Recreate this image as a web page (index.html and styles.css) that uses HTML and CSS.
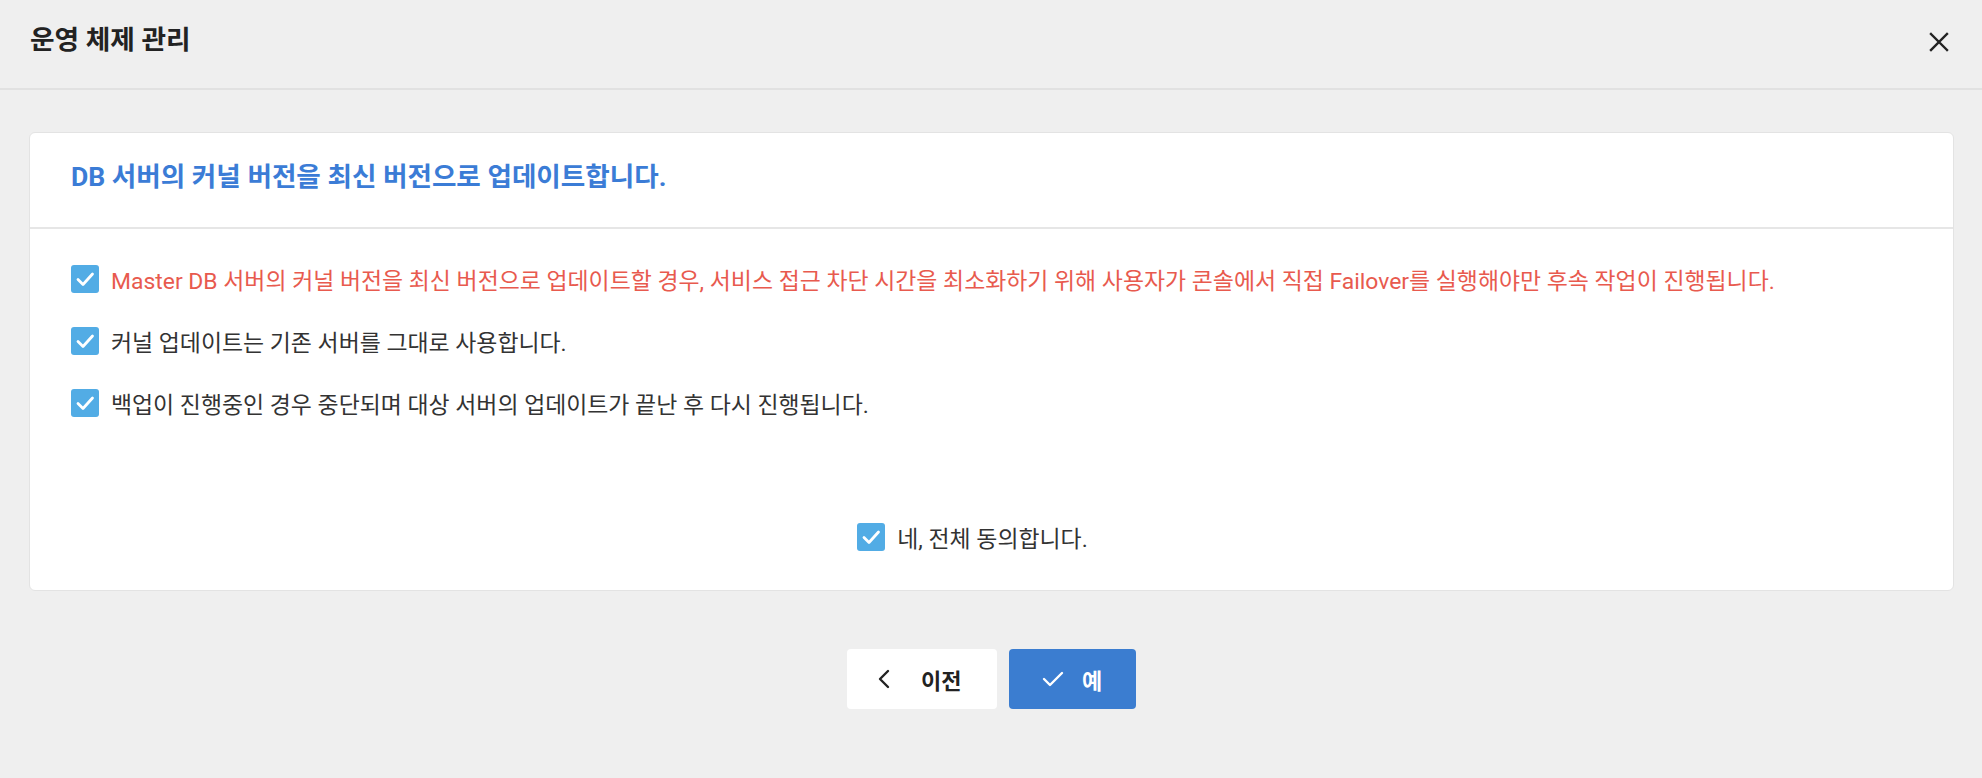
FILE: index.html
```html
<!DOCTYPE html>
<html lang="ko">
<head>
<meta charset="utf-8">
<title>운영 체제 관리</title>
<link rel="stylesheet" href="styles.css">
</head>
<body>
<header class="header">
  <h1 class="title">운영 체제 관리</h1>
  <button class="close" aria-label="닫기">
    <svg viewBox="0 0 20 20" width="20" height="20"><path d="M2 2 L18 18 M18 2 L2 18" stroke="#222" stroke-width="2.4" fill="none" stroke-linecap="square"/></svg>
  </button>
</header>
<main class="content">
  <section class="card">
    <div class="card-head">DB 서버의 커널 버전을 최신 버전으로 업데이트합니다.</div>
    <div class="card-body">
      <ul class="items">
        <li class="item warn"><span class="cb"><svg viewBox="0 0 28 28"><path d="M7 14.5 L12 19.5 L21.5 9" stroke="#fff" stroke-width="2.8" fill="none" stroke-linecap="round" stroke-linejoin="round"/></svg></span><span>Master DB 서버의 커널 버전을 최신 버전으로 업데이트할 경우, 서비스 접근 차단 시간을 최소화하기 위해 사용자가 콘솔에서 직접 Failover를 실행해야만 후속 작업이 진행됩니다.</span></li>
        <li class="item"><span class="cb"><svg viewBox="0 0 28 28"><path d="M7 14.5 L12 19.5 L21.5 9" stroke="#fff" stroke-width="2.8" fill="none" stroke-linecap="round" stroke-linejoin="round"/></svg></span><span>커널 업데이트는 기존 서버를 그대로 사용합니다.</span></li>
        <li class="item"><span class="cb"><svg viewBox="0 0 28 28"><path d="M7 14.5 L12 19.5 L21.5 9" stroke="#fff" stroke-width="2.8" fill="none" stroke-linecap="round" stroke-linejoin="round"/></svg></span><span>백업이 진행중인 경우 중단되며 대상 서버의 업데이트가 끝난 후 다시 진행됩니다.</span></li>
      </ul>
      <div class="agree item"><span class="cb"><svg viewBox="0 0 28 28"><path d="M7 14.5 L12 19.5 L21.5 9" stroke="#fff" stroke-width="2.8" fill="none" stroke-linecap="round" stroke-linejoin="round"/></svg></span><span>네, 전체 동의합니다.</span></div>
    </div>
  </section>
  <div class="actions">
    <button class="btn btn-prev"><svg viewBox="0 0 14 22" width="14" height="22"><path d="M11 3 L3 11 L11 19" stroke="#222" stroke-width="2.4" fill="none" stroke-linecap="round" stroke-linejoin="round"/></svg><span>이전</span></button>
    <button class="btn btn-yes"><svg viewBox="0 0 22 16" width="22" height="16"><path d="M2 8 L8 14 L20 2" stroke="#fff" stroke-width="2.4" fill="none" stroke-linecap="round" stroke-linejoin="round"/></svg><span>예</span></button>
  </div>
</main>
</body>
</html>
```
FILE: styles.css
```css
* { box-sizing: border-box; }
html, body { margin: 0; padding: 0; }
body {
  background: #efefef;
  font-family: Roboto, "Noto Sans CJK KR", sans-serif;
  color: #333;
}
.header {
  height: 90px;
  display: flex;
  align-items: center;
  justify-content: space-between;
  padding: 0 28px 5px 30px;
  border-bottom: 2px solid #e1e1e1;
}
.title {
  margin: 0 0 2px;
  font-size: 26.7px;
  font-weight: 700;
  line-height: 1.2;
  color: #222;
}
.close {
  border: 0;
  background: transparent;
  padding: 0;
  width: 30px;
  height: 30px;
  display: flex;
  align-items: center;
  justify-content: center;
  cursor: pointer;
}
.content {
  padding: 42px 28px 0 29px;
}
.card {
  background: #fff;
  border: 1px solid #e3e3e3;
  border-radius: 6px;
}
.card-head {
  height: 96px;
  display: flex;
  align-items: center;
  padding: 0 0 7px 41px;
  border-bottom: 2px solid #e6e6e6;
  font-size: 26.6px;
  line-height: 1.2;
  font-weight: 700;
  color: #3b7cd6;
}
.card-body {
  padding: 36px 41px 39px;
}
.items {
  list-style: none;
  margin: 0;
  padding: 0;
  display: flex;
  flex-direction: column;
  gap: 34px;
}
.item {
  display: flex;
  align-items: center;
  gap: 12px;
  font-size: 22.9px;
  color: #333;
  height: 28px;
}
.item.warn { color: #e85a4e; }
.cb {
  width: 28px;
  height: 28px;
  flex: none;
  background: #52ace5;
  border-radius: 3px;
  display: flex;
}
.cb svg { width: 28px; height: 28px; }
.agree {
  margin-top: 106px;
  justify-content: center;
  padding-right: 38px;
}
.actions {
  display: flex;
  justify-content: center;
  gap: 12px;
  margin-top: 58px;
}
.btn {
  height: 60px;
  border: 0;
  border-radius: 4px;
  display: flex;
  align-items: center;
  font-family: Roboto, "Noto Sans CJK KR", sans-serif;
  font-size: 22px;
  font-weight: 700;
  cursor: pointer;
}
.btn-prev {
  width: 150px;
  background: #fff;
  color: #222;
  padding-left: 30px;
  gap: 30px;
}
.btn-yes {
  width: 127px;
  background: #3b7dd0;
  color: #fff;
  padding-left: 33px;
  gap: 18px;
}
```
